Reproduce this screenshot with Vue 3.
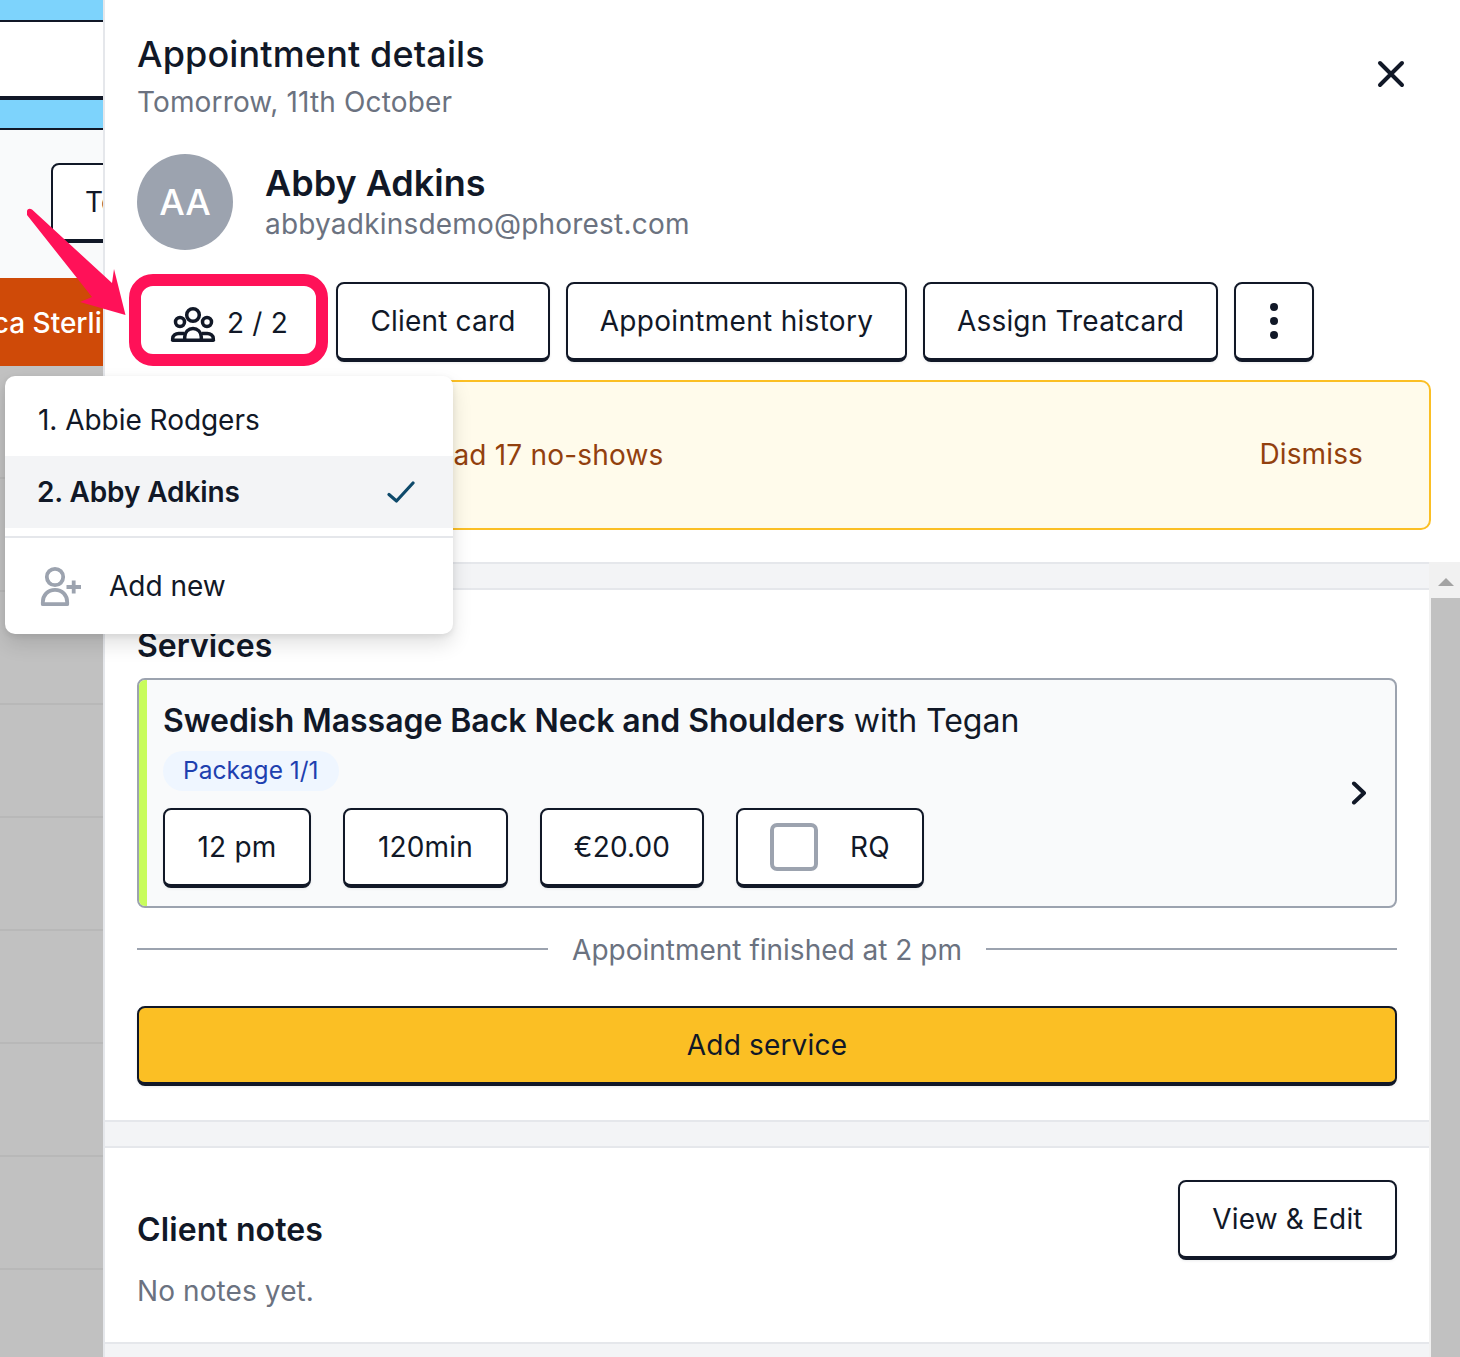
<template>
  <div class="screen">
    <aside class="calendar">
      <div class="blue-top"></div>
      <div class="white-slot"></div>
      <div class="blue-mid"></div>
      <div class="toolbar"><div class="ghost-btn">To</div></div>
      <div class="orange-slot"><span>Jessica Sterling</span></div>
      <div class="grid-area">
        <div v-for="n in 9" :key="n" class="grid-row"></div>
      </div>
    </aside>

    <main class="panel">
      <header class="head">
        <div>
          <h1>Appointment details</h1>
          <p class="sub">Tomorrow, 11th October</p>
        </div>
        <svg class="close" width="28" height="28" viewBox="0 0 28 28" fill="none" stroke="#111827" stroke-width="4" stroke-linecap="round"><path d="M3 3 25 25M25 3 3 25"/></svg>
      </header>

      <section class="client">
        <div class="avatar">AA</div>
        <div>
          <div class="name">Abby Adkins</div>
          <div class="email">abbyadkinsdemo@phorest.com</div>
        </div>
      </section>

      <nav class="actions">
        <button class="btn guests">
          <svg width="46" height="38" viewBox="0 0 46 38" fill="none" stroke="#111827" stroke-width="3.5">
            <circle cx="23" cy="11" r="6.300"/>
            <circle cx="10" cy="18" r="4.500"/>
            <circle cx="37" cy="18" r="4.500"/>
            <path d="M14.700 36v-3c0-5 3.700-8.500 8.300-8.500s8.300 3.500 8.300 8.500v3"/>
            <path d="M2.700 36v-1.500c0-3 2.800-5.100 6-5.100h5.500M43.300 36v-1.500c0-3-2.800-5.100-6-5.100H32"/>
            <path d="M2.700 36.200h40.600" stroke-linecap="round"/>
          </svg>
          <span>2 / 2</span>
        </button>
        <button class="btn w-card">Client card</button>
        <button class="btn w-history">Appointment history</button>
        <button class="btn w-treat">Assign Treatcard</button>
        <button class="btn more" aria-label="More">
          <svg width="10" height="38" viewBox="0 0 10 38" fill="#111827"><circle cx="5" cy="5" r="4"/><circle cx="5" cy="19" r="4"/><circle cx="5" cy="33" r="4"/></svg>
        </button>
      </nav>

      <div class="notice">
        <span class="notice-text">This client has had 17 no-shows</span>
        <span class="dismiss">Dismiss</span>
      </div>

      <div class="scroller">
        <div class="scroll-content">
          <div class="band"></div>
          <section class="block services">
            <h2>Services</h2>
            <div class="service-card">
              <div class="service-main">
                <div class="service-title"><strong>Swedish Massage Back Neck and Shoulders</strong> with Tegan</div>
                <span class="pill">Package 1/1</span>
                <div class="chips">
                  <button class="btn w-time">12 pm</button>
                  <button class="btn w-dur">120min</button>
                  <button class="btn w-price">€20.00</button>
                  <button class="btn chip-rq"><i class="box"></i><span>RQ</span></button>
                </div>
              </div>
              <svg class="chevron" width="16" height="24" viewBox="0 0 16 24" fill="none" stroke="#111827" stroke-width="4" stroke-linecap="round" stroke-linejoin="round"><path d="M3 2.500 13 12 3 21.500"/></svg>
            </div>
            <div class="finished"><span>Appointment finished at 2 pm</span></div>
            <button class="btn add-service">Add service</button>
          </section>
          <div class="band"></div>
          <section class="block notes">
            <div>
              <h2>Client notes</h2>
              <p class="empty">No notes yet.</p>
            </div>
            <button class="btn w-edit">View &amp; Edit</button>
          </section>
          <div class="band"></div>
        </div>
        <div class="scrollbar">
          <div class="sb-arrow"></div>
          <div class="sb-thumb"></div>
        </div>
      </div>
    </main>

    <div class="popover">
      <div class="pop-row">1. Abbie Rodgers</div>
      <div class="pop-row active">
        <span>2. Abby Adkins</span>
        <svg width="28" height="22" viewBox="0 0 28 22" fill="none" stroke="#0e4a6b" stroke-width="3.2" stroke-linecap="round" stroke-linejoin="round"><path d="M2 13.500 9.500 20 26 2"/></svg>
      </div>
      <div class="pop-add">
        <svg width="42" height="44" viewBox="0 0 42 44" fill="none" stroke="#9ca3af" stroke-width="3.8">
          <circle cx="15" cy="13" r="8.200"/>
          <path d="M2.800 40.200v-2c0-7 5-12.400 12.200-12.400s12.200 5.400 12.200 12.400v2z" stroke-linejoin="round"/>
          <path d="M26.500 23H41M33.700 16.500v13"/>
        </svg>
        <span>Add new</span>
      </div>
    </div>

    <svg class="pointer" width="110" height="120" viewBox="0 0 110 120">
      <path d="M1 3C1.500 .5 4 0 6 1.500L86 75 88 61 99.500 107 54 94 66 89 1 7Z" fill="#ff1158"/>
    </svg>
  </div>
</template>

<script setup>
</script>

<style>
html, body { margin: 0; background: #fff; }
</style>

<style scoped>
* { box-sizing: border-box; }
.screen {
  position: relative;
  display: flex;
  width: 1460px;
  height: 1357px;
  overflow: hidden;
  font-family: Inter, "Noto Sans", sans-serif;
  color: #111827;
  background: #fff;
}
.calendar {
  flex: 0 0 103px;
  display: flex;
  flex-direction: column;
  overflow: hidden;
  background: #f9fafb;
}
.calendar > * { flex: none; }
.blue-top { height: 22px; background: #7dd3fc; border-bottom: 2px solid #111827; }
.white-slot { height: 74px; background: #fff; }
.blue-mid { height: 34px; background: #7dd3fc; border-top: 4px solid #111827; border-bottom: 2px solid #111827; }
.toolbar { height: 148px; padding: 33px 0 0 51px; }
.ghost-btn {
  width: 120px;
  height: 80px;
  padding-left: 32px;
  border: 2px solid #111827;
  border-bottom-width: 4px;
  border-radius: 8px;
  background: #fff;
  font-size: 28px;
  line-height: 74px;
}
.orange-slot {
  height: 88px;
  background: #cf4a08;
  color: #fff;
  font-size: 28px;
  font-weight: 500;
  line-height: 90px;
  white-space: nowrap;
}
.orange-slot span { display: block; margin-left: -77px; }
.grid-area { flex: 1; background: #c1c1c1; }
.grid-row { height: 113px; border-bottom: 2px solid #b8b8b8; }
.panel {
  flex: 1;
  display: flex;
  flex-direction: column;
  min-width: 0;
  border-left: 2px solid #e5e7eb;
  background: #fff;
}
.head {
  display: flex;
  justify-content: space-between;
  height: 154px;
  padding: 30px 55px 0 32px;
}
h1 { margin: 0; font-size: 36px; font-weight: 450; line-height: 48px; letter-spacing: 0.14px; }
.sub { margin: 6px 0 0; font-size: 28px; line-height: 36px; color: #6b7280; letter-spacing: 0.14px; }
.close { margin-top: 30px; }
.client { display: flex; align-items: center; gap: 32px; padding-left: 32px; height: 96px; }
.avatar {
  flex: none;
  width: 96px;
  height: 96px;
  border-radius: 50%;
  background: #9ca3af;
  color: #fff;
  font-size: 36px;
  font-weight: 500;
  line-height: 96px;
  text-align: center;
}
.name { font-size: 36px; font-weight: 600; line-height: 44px; }
.email { font-size: 28px; line-height: 36px; color: #6b7280; margin: 1px 0; letter-spacing: 0.2px; }
.actions { display: flex; gap: 16px; margin-top: 32px; padding-left: 33px; }
.btn {
  flex: none;
  height: 80px;
  padding: 0;
  border: 2px solid #111827;
  border-bottom-width: 4px;
  border-radius: 8px;
  background: #fff;
  box-shadow: 0 1px 3px rgba(17, 24, 39, 0.08);
  color: #111827;
  font-family: inherit;
  font-size: 28px;
  line-height: 36px;
  letter-spacing: 0.17px;
  white-space: nowrap;
  cursor: pointer;
}
.w-card { width: 214px; }
.w-history { width: 341px; letter-spacing: 0.3px; }
.w-treat { width: 295px; }
.w-time { width: 148px; }
.w-dur { width: 165px; }
.w-price { width: 164px; }
.w-edit { width: 219px; }
.guests {
  position: relative;
  display: flex;
  align-items: center;
  justify-content: center;
  gap: 10px;
  width: 182px;
  padding: 0;
  border-color: transparent;
  box-shadow: none;
}
.guests svg { margin-top: 4px; }
.guests span { margin-top: 4px; margin-left: 1px; }
.guests::after {
  content: "";
  position: absolute;
  top: -10px;
  right: -10px;
  bottom: -8px;
  left: -11px;
  border: 12px solid #ff1158;
  border-radius: 24px;
}
.more { display: flex; align-items: center; justify-content: center; width: 80px; padding: 0; }
.notice {
  display: flex;
  align-items: center;
  justify-content: space-between;
  height: 150px;
  margin: 18px 29px 32px 33px;
  padding: 0 66px 0 95px;
  border: 2px solid #fbbf24;
  border-radius: 10px;
  background: #fffbeb;
  color: #92400e;
  font-size: 28px;
}
.notice-text { letter-spacing: 0.2px; }
.dismiss { margin-top: -2px; letter-spacing: 0.14px; }
.scroller { flex: 1; display: flex; min-height: 0; overflow: hidden; }
.scroll-content { flex: 0 0 1324px; overflow: hidden; }
.band { height: 28px; background: #f3f4f6; border-top: 2px solid #e5e7eb; border-bottom: 2px solid #e5e7eb; }
.block { padding: 36px 32px 34px; background: #fff; }
h2 { margin: 0; font-size: 32px; font-weight: 600; line-height: 40px; }
.service-card {
  position: relative;
  display: flex;
  align-items: center;
  justify-content: space-between;
  height: 230px;
  margin-top: 12px;
  padding: 0 28px 0 24px;
  border: 2px solid #9ca3af;
  border-radius: 8px;
  background: #f9fafb;
  overflow: hidden;
}
.service-card::before {
  content: "";
  position: absolute;
  left: 0;
  top: 0;
  bottom: 0;
  width: 8px;
  background: #c8fc5c;
}
.service-main { display: flex; flex-direction: column; align-items: flex-start; padding-top: 2px; }
.service-title { font-size: 32px; line-height: 41px; }
.service-title strong { font-weight: 600; letter-spacing: -0.05px; }
.pill {
  margin-top: 10px;
  padding: 0 20px;
  height: 40px;
  border-radius: 20px;
  background: #eff6ff;
  color: #1e40af;
  font-size: 24.5px;
  line-height: 38px;
}
.chips { display: flex; gap: 32px; margin-top: 17px; }
.chip-rq { display: flex; align-items: center; gap: 32px; width: 188px; padding-left: 32px; }
.box { width: 48px; height: 48px; border: 4px solid #9ca3af; border-radius: 7px; background: #fff; }
.finished {
  display: flex;
  align-items: center;
  gap: 24px;
  height: 36px;
  margin-top: 23px;
  color: #6b7280;
  font-size: 28px;
}
.finished span { position: relative; top: 1px; }
.finished::before, .finished::after { content: ""; flex: 1; height: 2px; background: #9ca3af; }
.add-service {
  display: block;
  width: 100%;
  margin-top: 39px;
  background: #fbbf24;
}
.notes { display: flex; justify-content: space-between; align-items: flex-start; height: 194px; padding: 32px 32px 0; }
.notes h2 { margin-top: 30px; letter-spacing: 0.1px; }
.empty { margin: 23px 0 0; color: #6b7280; font-size: 28px; line-height: 36px; letter-spacing: 0.1px; }
.scrollbar { flex: 1; background: #f1f1f1; display: flex; flex-direction: column; align-items: stretch; padding-left: 2px; }
.sb-arrow { flex: none; height: 36px; position: relative; }
.sb-arrow::before {
  content: "";
  position: absolute;
  left: 7px;
  top: 16px;
  border-left: 8px solid transparent;
  border-right: 8px solid transparent;
  border-bottom: 8px solid #a3a3a3;
}
.sb-thumb { flex: 1; background: #c1c1c1; }
.popover {
  position: absolute;
  left: 5px;
  top: 376px;
  width: 448px;
  height: 258px;
  border-radius: 10px;
  background: #fff;
  box-shadow: 0 10px 20px rgba(0, 0, 0, 0.12), 0 2px 6px rgba(0, 0, 0, 0.08);
  font-size: 28px;
  overflow: hidden;
}
.pop-row { display: flex; align-items: center; justify-content: space-between; padding: 0 38px 0 33px; height: 72px; margin-top: 8px; color: #111827; letter-spacing: -0.04px; }
.pop-row.active { margin-top: 0; padding-left: 32px; background: #f3f4f6; font-weight: 600; letter-spacing: -0.12px; }
.pop-add {
  display: flex;
  align-items: center;
  gap: 27px;
  height: 98px;
  margin-top: 8px;
  padding: 0 0 0 35px;
  border-top: 2px solid #e5e7eb;
}
.pointer { position: absolute; left: 26px; top: 208px; }
</style>
